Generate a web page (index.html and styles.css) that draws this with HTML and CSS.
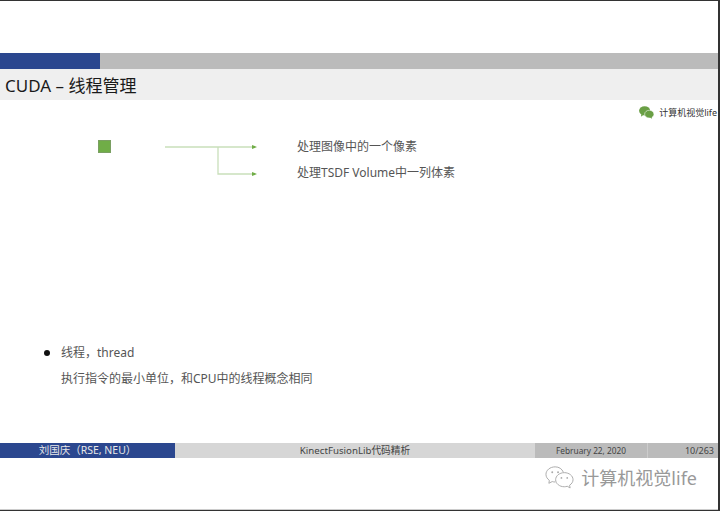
FILE: index.html
```html
<!DOCTYPE html>
<html lang="zh">
<head>
<meta charset="utf-8">
<title>CUDA – 线程管理</title>
<link rel="stylesheet" href="styles.css">
</head>
<body>
<div class="frame">
  <div class="top-gap"></div>
  <div class="progress"><div class="progress-fill"></div></div>
  <h1 class="title">CUDA – 线程管理</h1>
  <div class="brand">
    <svg class="brand-icon" viewBox="0 0 16 14" aria-hidden="true">
      <ellipse cx="6" cy="5.2" rx="6" ry="5" fill="#6a9f45"/>
      <path d="M2.5 8.5 2 11.5 5 9.5z" fill="#6a9f45"/>
      <ellipse cx="11" cy="8.8" rx="5" ry="4.2" fill="#6a9f45" stroke="#fff" stroke-width=".6"/>
      <path d="M13.5 11.5 14 13.8 11.5 12.5z" fill="#6a9f45"/>
    </svg>
    <span>计算机视觉life</span>
  </div>
  <div class="diagram">
    <div class="square"></div>
    <svg class="connector" viewBox="0 0 92 36" aria-hidden="true">
      <path class="wire" d="M0 7H88M53 7V34H88"/>
      <path class="head" d="M92 7 87 5V9zM92 34 87 32V36z"/>
    </svg>
    <div class="labels">
      <p>处理图像中的一个像素</p>
      <p>处理TSDF Volume中一列体素</p>
    </div>
  </div>
  <div class="notes">
    <div class="bullet-row"><span class="dot"></span><span>线程，thread</span></div>
    <p class="detail">执行指令的最小单位，和CPU中的线程概念相同</p>
  </div>
  <footer class="footer">
    <div class="cell author">刘国庆（RSE, NEU）</div>
    <div class="cell talk">KinectFusionLib代码精析</div>
    <div class="cell date">February 22, 2020</div>
    <div class="cell page">10/263</div>
  </footer>
  <div class="watermark">
    <svg class="wm-icon" viewBox="0 0 30 24" aria-hidden="true">
      <path class="wm-line" d="M19 7C17.5 3.5 14.5 1.5 10.5 1.5 5.200 1.500 1 5 1 9.300c0 2.700 1.500 4.700 3.500 6.200L4 18.500l3.500-1.800c1 .3 2 .5 3.200.5"/>
      <path class="wm-line" d="M20 7.500c-5 0-9 3.300-9 7.300s4 7.300 9 7.300c1.100 0 2-.2 3-.5l3 1.700-.6-2.800c2.300-1.400 3.600-3.500 3.600-5.700 0-4-4-7.300-9-7.300z"/>
      <circle cx="7.500" cy="7" r="1" fill="#aaa"/><circle cx="13.500" cy="7" r="1" fill="#aaa"/>
      <circle cx="17" cy="13" r=".9" fill="#aaa"/><circle cx="23" cy="13" r=".9" fill="#aaa"/>
    </svg>
    <span>计算机视觉life</span>
  </div>
  <div class="bottom-edge"></div>
</div>
</body>
</html>
```
FILE: styles.css
```css
* { box-sizing: border-box; }
html, body { margin: 0; padding: 0; background: #fff; }
body { font-family: "Noto Sans", "Noto Sans CJK SC", sans-serif; color: #222; }
p { margin: 0; }
.frame {
  width: 720px; height: 511px; display: flex; flex-direction: column;
  border-top: 1px solid #333; border-right: 2px solid #333; overflow: hidden; background: #fff;
}
.top-gap { height: 52px; flex: none; }
.progress { height: 16px; flex: none; background: #bbb; margin-right: -2px; }
.progress-fill { width: 100px; height: 100%; background: #2b478f; }
.title {
  margin: 0 -2px 0 0; height: 31px; flex: none; background: #efefef; padding-left: 5px;
  font-size: 17px; font-weight: 400; line-height: 33px; color: #1a1a1a;
}
.brand {
  height: 24px; flex: none; display: flex; align-items: center; justify-content: flex-end;
  gap: 5px; padding-right: 1px; font-size: 9px; color: #333;
}
.brand-icon { width: 15px; height: 13px; }
.diagram { display: flex; flex: none; height: 216px; padding: 16px 0 0 98px; }
.square { width: 13px; height: 13px; background: #70ad47; border: 1px solid #7a9f62; flex: none; }
.connector { width: 92px; height: 36px; margin: 0 0 0 54px; flex: none; }
.wire { fill: none; stroke: #c9dfbb; stroke-width: 1.300; }
.head { fill: #70ad47; }
.labels { margin: -2px 0 0 40px; display: flex; flex-direction: column; gap: 8px; font-size: 12px; line-height: 18px; color: #555; }
.notes { flex: none; height: 103px; padding: 4px 0 0 44px; font-size: 12px; line-height: 18px; color: #555; }
.bullet-row { display: flex; align-items: center; }
.dot { width: 6px; height: 6px; border-radius: 50%; background: #111; margin-right: 11px; }
.detail { margin: 8px 0 0 17px; }
.footer { display: flex; height: 15px; flex: none; font-size: 9.700px; line-height: 15px; margin-right: -2px; }
.cell { text-align: center; white-space: nowrap; overflow: hidden; }
.author { width: 175px; background: #2b478f; color: #e8e8e8; font-size: 10.500px; }
.talk { width: 360px; background: #d6d6d6; color: #444; }
.date { width: 112px; background: #bbb; color: #444; font-size: 8.300px; }
.page { width: 73px; background: #bbb; color: #444; text-align: right; padding-right: 6px; border-left: 1px solid #ccc; font-size: 9px; }
.watermark {
  flex: 1; display: flex; align-items: center; justify-content: flex-end; gap: 7px; padding: 0 21px 13px 0;
  font-size: 18px; color: #999;
}
.wm-icon { width: 29px; height: 24px; }
.wm-line { fill: #fff; stroke: #aaa; stroke-width: 1; }
.bottom-edge { height: 2px; flex: none; background: #333; border-top: 1px solid #ccc; margin-right: -2px; }
```
